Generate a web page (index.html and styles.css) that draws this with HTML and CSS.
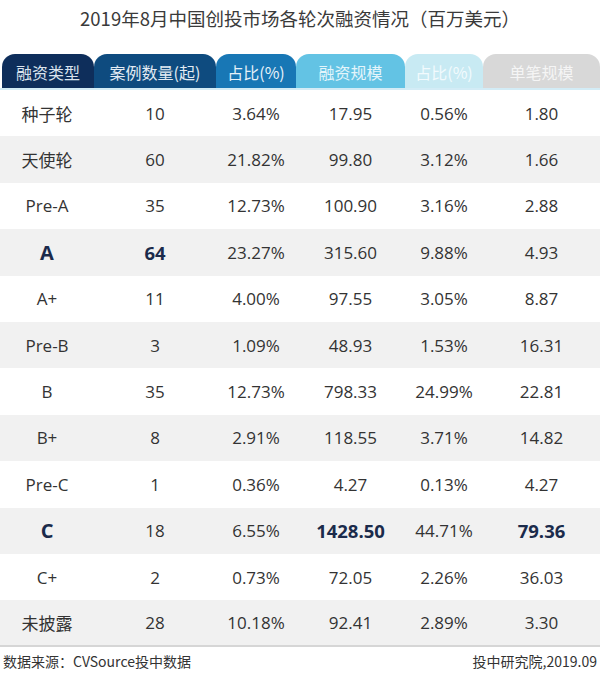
FILE: index.html
```html
<!DOCTYPE html>
<html lang="zh">
<head>
<meta charset="utf-8">
<link rel="stylesheet" href="styles.css">
</head>
<body>
<div class="page">
  <h1 class="title">2019年8月中国创投市场各轮次融资情况（百万美元）</h1>
  <div class="tabs">
    <div class="tab t1">融资类型</div>
    <div class="tab t2">案例数量(起)</div>
    <div class="tab t3">占比(%)</div>
    <div class="tab t4">融资规模</div>
    <div class="tab t5">占比(%)</div>
    <div class="tab t6">单笔规模</div>
  </div>
  <div class="rows">
    <div class="row"><span>种子轮</span><span>10</span><span>3.64%</span><span>17.95</span><span>0.56%</span><span>1.80</span></div>
    <div class="row alt"><span>天使轮</span><span>60</span><span>21.82%</span><span>99.80</span><span>3.12%</span><span>1.66</span></div>
    <div class="row"><span>Pre-A</span><span>35</span><span>12.73%</span><span>100.90</span><span>3.16%</span><span>2.88</span></div>
    <div class="row alt"><span class="big">A</span><span class="bold">64</span><span>23.27%</span><span>315.60</span><span>9.88%</span><span>4.93</span></div>
    <div class="row"><span>A+</span><span>11</span><span>4.00%</span><span>97.55</span><span>3.05%</span><span>8.87</span></div>
    <div class="row alt"><span>Pre-B</span><span>3</span><span>1.09%</span><span>48.93</span><span>1.53%</span><span>16.31</span></div>
    <div class="row"><span>B</span><span>35</span><span>12.73%</span><span>798.33</span><span>24.99%</span><span>22.81</span></div>
    <div class="row alt"><span>B+</span><span>8</span><span>2.91%</span><span>118.55</span><span>3.71%</span><span>14.82</span></div>
    <div class="row"><span>Pre-C</span><span>1</span><span>0.36%</span><span>4.27</span><span>0.13%</span><span>4.27</span></div>
    <div class="row alt"><span class="big">C</span><span>18</span><span>6.55%</span><span class="bold">1428.50</span><span>44.71%</span><span class="bold">79.36</span></div>
    <div class="row"><span>C+</span><span>2</span><span>0.73%</span><span>72.05</span><span>2.26%</span><span>36.03</span></div>
    <div class="row alt last"><span>未披露</span><span>28</span><span>10.18%</span><span>92.41</span><span>2.89%</span><span>3.30</span></div>
  </div>
  <div class="footer">
    <span>数据来源：CVSource投中数据</span>
    <span>投中研究院,2019.09</span>
  </div>
</div>
</body>
</html>
```

FILE: styles.css
```css
* { box-sizing: border-box; }
html, body { margin: 0; padding: 0; background: #fff; }
body {
  font-family: "Open Sans", "Noto Sans CJK SC", sans-serif;
  color: #333;
}
.page {
  width: 600px;
  height: 680px;
  overflow: hidden;
}
.title {
  margin: 0;
  height: 54px;
  padding-top: 4px;
  text-align: center;
  font-family: "Noto Sans CJK SC", sans-serif;
  font-weight: 400;
  font-size: 18.5px;
  line-height: 28px;
  color: #3a3a3a;
}
.tabs, .row {
  display: grid;
  grid-template-columns: 94px 122px 80px 109px 78px 117px;
}
.tabs {
  height: 36px;
  border-bottom: 2px solid #d3ecf6;
}
.tab {
  display: flex;
  align-items: center;
  justify-content: center;
  border-radius: 13px 13px 0 0;
  font-family: "Noto Sans CJK SC", sans-serif;
  font-size: 16px;
  padding-top: 1px;
}
.t1 { background: #0e2e5b; color: #dbe4ee; margin-left: 2px; }
.t2 { background: #0e4b7f; color: #e3ebf3; }
.t3 { background: #1877b5; color: #e6f1f9; }
.t4 { background: #63c3e4; color: #e4f5fb; }
.t5 { background: #c8eaf3; color: #f2fafd; }
.t6 { background: #d8d8d8; color: #f5f5f5; }
.row {
  height: 46.4px;
  align-items: center;
  font-size: 17px;
  color: #333;
}
.row span { text-align: center; }
.row.alt { background: #f1f1f1; }
.row.last { border-bottom: 2px solid #d6d6d6; }
.big {
  font-size: 20px;
  font-weight: 700;
  color: #1b2b4b;
}
.bold {
  font-size: 18.5px;
  font-weight: 700;
  color: #1b2b4b;
}
.footer {
  display: flex;
  justify-content: space-between;
  padding: 3px 3px 0 3px;
  font-family: "Noto Sans CJK SC", sans-serif;
  font-size: 14px;
  line-height: 22px;
  color: #333;
}
```
